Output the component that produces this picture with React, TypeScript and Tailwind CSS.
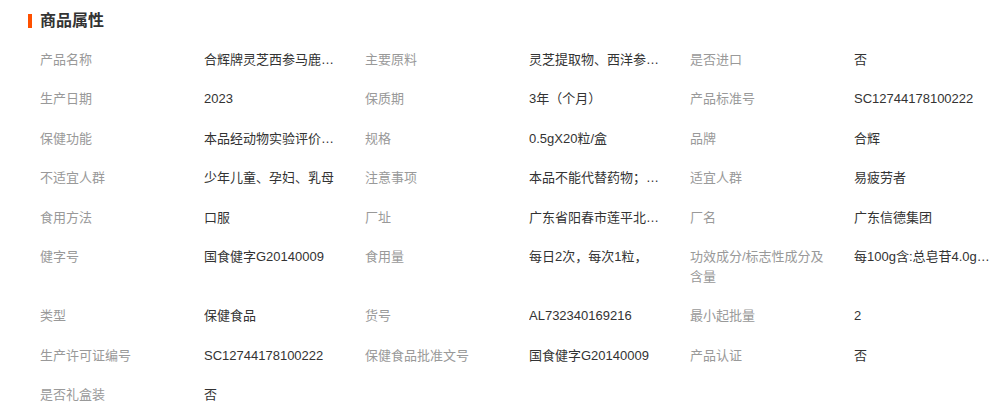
import React from 'react';

type Attr = { label: string; value: string };

const attrs: Attr[] = [
  { label: '产品名称', value: '合辉牌灵芝西参马鹿茸胶囊' },
  { label: '主要原料', value: '灵芝提取物、西洋参、马鹿茸、淀粉' },
  { label: '是否进口', value: '否' },
  { label: '生产日期', value: '2023' },
  { label: '保质期', value: '3年（个月）' },
  { label: '产品标准号', value: 'SC12744178100222' },
  { label: '保健功能', value: '本品经动物实验评价，具有缓解体力疲劳的保健功能' },
  { label: '规格', value: '0.5gX20粒/盒' },
  { label: '品牌', value: '合辉' },
  { label: '不适宜人群', value: '少年儿童、孕妇、乳母' },
  { label: '注意事项', value: '本品不能代替药物；不宜超过推荐量' },
  { label: '适宜人群', value: '易疲劳者' },
  { label: '食用方法', value: '口服' },
  { label: '厂址', value: '广东省阳春市莲平北路工业园' },
  { label: '厂名', value: '广东信德集团' },
  { label: '健字号', value: '国食健字G20140009' },
  { label: '食用量', value: '每日2次，每次1粒，' },
  { label: '功效成分/标志性成分及含量', value: '每100g含:总皂苷4.0g、粗多糖' },
  { label: '类型', value: '保健食品' },
  { label: '货号', value: 'AL732340169216' },
  { label: '最小起批量', value: '2' },
  { label: '生产许可证编号', value: 'SC12744178100222' },
  { label: '保健食品批准文号', value: '国食健字G20140009' },
  { label: '产品认证', value: '否' },
  { label: '是否礼盒装', value: '否' },
];

const App: React.FC = () => {
  return (
    <div
      className="w-[995px] h-[406px] overflow-hidden bg-white text-[13px]"
      style={{ fontFamily: '"Liberation Sans", "Noto Sans CJK SC", sans-serif' }}
    >
      {/* Title */}
      <div className="flex items-center pl-[28px] pt-[9px] h-[33px]">
        <span className="w-[4px] h-[14px] bg-[#ff5000]" />
        <h3 className="ml-[8px] text-[16px] leading-[24px] font-bold text-[#333]">商品属性</h3>
      </div>

      {/* Attributes */}
      <div className="grid grid-cols-[325px_325px_325px] pl-[40px] mt-[6.5px] w-[1015px]">
        {attrs.map((a) => (
          <div key={a.label} className="flex py-[10px] leading-[19.5px]">
            <div className="w-[164px] pr-[24px] text-[#999]">{a.label}</div>
            <div className="w-[136px] truncate text-[#333]">{a.value}</div>
          </div>
        ))}
      </div>
    </div>
  );
};

export default App;
